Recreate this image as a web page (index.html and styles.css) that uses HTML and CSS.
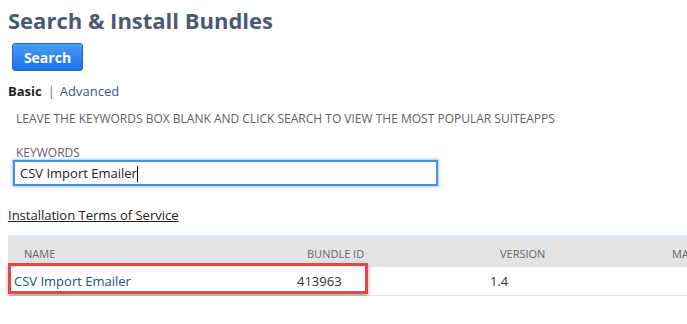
FILE: index.html
```html
<!doctype html>
<html>
<head>
    <meta charset='utf-8'>
    <title>Search &amp; Install Bundles</title>
    <link rel="stylesheet" href="styles.css">
</head>
<body>
<div class='page'>
    <h1 class='title'>Search &amp; Install Bundles</h1>
    <div class='btnrow'><button class='btn'>Search</button></div>
    <div class='tabs'><b>Basic</b><span class='sep'>|</span><a class='adv'>Advanced</a></div>
    <p class='hint'>LEAVE THE KEYWORDS BOX BLANK AND CLICK SEARCH TO VIEW THE MOST POPULAR SUITEAPPS</p>
    <div class='field'>
        <label class='lbl'>KEYWORDS</label>
        <div class='inputbox'>CSV Import Emailer<span class='caret'></span></div>
    </div>
    <a class='terms'>Installation Terms of Service</a>
    <div class='tablewrap'>
        <div class='strip'></div>
        <div class='thead'>
            <div class='c c1'>NAME</div>
            <div class='c c2'>BUNDLE ID</div>
            <div class='c c3'>VERSION</div>
            <div class='c c4'>MANAGED</div>
        </div>
        <div class='trow'>
            <div class='c c1'><a class='name'>CSV Import Emailer</a></div>
            <div class='c c2'>413963</div>
            <div class='c c3'>1.4</div>
            <div class='c c4'></div>
        </div>
        <div class='mark'></div>
    </div>
</div>
</body>
</html>
```

FILE: styles.css
```css
*{margin:0;padding:0;box-sizing:border-box;}
html,body{background:#fff;overflow:hidden;}
body{font-family:"Open Sans","Noto Sans",sans-serif;color:#333;}
.page{padding:5px 0 0 8px;width:720px;}

.title{font-size:22px;font-weight:700;color:#4b5a73;line-height:30px;letter-spacing:0;}
.btnrow{padding:8px 0 0 4px;height:36px;}
.btn{display:block;width:71px;height:28px;border:1px solid #1e63cf;border-radius:3px;background:linear-gradient(#4b9af6,#1b72ea);color:#fff;font:700 14px "Open Sans",sans-serif;}

.tabs{margin-top:11px;font-size:13px;line-height:18px;color:#222;}
.tabs b{font-weight:700;}
.sep{color:#a0606a;margin:0 5px 0 6px;}
.adv{color:#3c5586;}

.hint{margin:11px 0 0 8px;font-size:12px;line-height:16px;color:#5f5f5f;}

.field{margin:19px 0 0 8px;}
.lbl{display:block;font-size:12px;line-height:13px;color:#5f5f5f;}
.inputbox{margin:1px 0 0 -3px;width:425px;height:26px;border:2px solid #4d8fd9;box-shadow:0 0 2px 1px #a9cdf4;font-size:13px;line-height:22px;padding-left:5px;color:#222;}
.caret{display:inline-block;width:1px;height:16px;background:#000;vertical-align:-4px;}

.terms{display:inline-block;margin-top:21px;font-size:13px;line-height:17px;color:#222;text-decoration:underline;}

.tablewrap{position:relative;margin-top:10px;width:712px;}
.strip{height:4px;background:#dfe6ef;}
.thead{display:flex;height:28px;background:#e4e4e4;align-items:center;font-size:11px;color:#666;}
.trow{display:flex;height:29px;align-items:center;font-size:13px;color:#333;border-bottom:1px solid #e2e2e2;}
.c{flex:none;}
.c1{width:283px;}
.c2{width:193px;}
.c3{width:172px;}
.c4{width:64px;}
.thead .c{padding-left:16px;}
.trow .c{padding-left:6px;}
.name{color:#24508a;}

/* highlight annotation over the result row */
.mark{position:absolute;left:0;top:28px;width:360px;height:31px;border:3px solid #e8434b;box-shadow:0 2px 4px rgba(0,0,0,.35);}
```
